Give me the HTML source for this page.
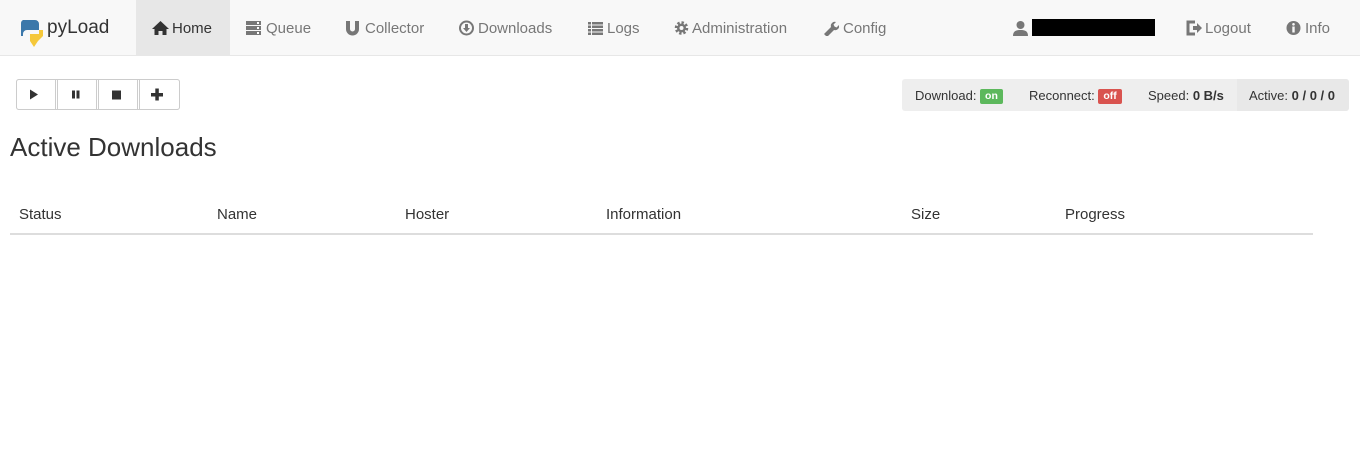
<!DOCTYPE html>
<html><head><meta charset="utf-8"><style>
body{margin:0;width:1360px;height:473px;background:#fff;font-family:"Liberation Sans",sans-serif;color:#333;position:relative;overflow:hidden}
.nav{position:absolute;left:0;top:0;width:1360px;height:55px;background:#f8f8f8;border-bottom:1px solid #e7e7e7}
.a{position:absolute;top:0;height:55px;line-height:57px;font-size:15px;color:#777;white-space:nowrap}
.a svg{position:absolute;top:20px}
.t{position:absolute;font-size:15px;white-space:nowrap}
.btn{position:absolute;top:79px;width:40px;height:30px;border:1px solid #ccc;background:#fff;box-sizing:border-box}
.st{position:absolute;left:902px;top:79px;width:447px;height:32px;background:#eee;border-radius:3px;font-size:13px;line-height:33px}
.lb{display:inline-block;font-size:10.5px;font-weight:bold;color:#fff;line-height:15px;padding:0 5px;border-radius:2px;vertical-align:1px}
</style></head><body>
<div class="nav">
<svg style="position:absolute;left:19px;top:16px" width="26" height="32" viewBox="0 0 26 32"><path d="M4 4h12a4 4 0 0 1 4 4v6H8a4 4 0 0 0-4 4v2H2V8a4 4 0 0 1 2-4z" fill="#3c78aa"/><path d="M20 14h4v6l-5 5-4 6-4-6v-7h9z" fill="#f5c83a"/></svg>
<div class="a" style="left:47px;font-size:19px;color:#333;line-height:55px">pyLoad</div>
<div style="position:absolute;left:136px;top:0;width:94px;height:55px;background:#e7e7e7"></div>
<div class="a" style="left:152px;color:#333"><svg width="17" height="16" viewBox="0 0 17 16" style="left:0"><path d="M8.5 1L0 9h2.5v6h4v-4h4v4h4V9H17z" fill="#333"/></svg><span style="margin-left:20px">Home</span></div>
<div class="a" style="left:246px"><svg width="15" height="16" viewBox="0 0 15 16" style="left:0"><rect x="0" y="1" width="15" height="4" fill="#777"/><rect x="0" y="6" width="15" height="4" fill="#777"/><rect x="0" y="11" width="15" height="4" fill="#777"/><rect x="11" y="2" width="2" height="2" fill="#fff"/><rect x="11" y="7" width="2" height="2" fill="#fff"/><rect x="11" y="12" width="2" height="2" fill="#fff"/></svg><span style="margin-left:20px">Queue</span></div>
<div class="a" style="left:346px"><svg width="13" height="16" viewBox="0 0 13 16" style="left:0"><path d="M0 1h4v8a2.5 2.5 0 0 0 5 0V1h4v8a6.5 6.5 0 0 1-13 0z" fill="#777"/></svg><span style="margin-left:19px">Collector</span></div>
<div class="a" style="left:459px"><svg width="15" height="16" viewBox="0 0 15 16" style="left:0"><circle cx="7.5" cy="8" r="6.5" fill="none" stroke="#777" stroke-width="2"/><path d="M6 4h3v4h2l-3.5 4L4 8h2z" fill="#777"/></svg><span style="margin-left:19px">Downloads</span></div>
<div class="a" style="left:588px"><svg width="15" height="16" viewBox="0 0 15 16" style="left:0"><g fill="#777"><rect x="0" y="2" width="3" height="2.5"/><rect x="4" y="2" width="11" height="2.5"/><rect x="0" y="5.5" width="3" height="2.5"/><rect x="4" y="5.5" width="11" height="2.5"/><rect x="0" y="9" width="3" height="2.5"/><rect x="4" y="9" width="11" height="2.5"/><rect x="0" y="12.5" width="3" height="2.5"/><rect x="4" y="12.5" width="11" height="2.5"/></g></svg><span style="margin-left:19px">Logs</span></div>
<div class="a" style="left:674px"><svg width="15" height="16" viewBox="0 0 15 16" style="left:0"><circle cx="7.5" cy="8" r="5" fill="none" stroke="#777" stroke-width="3.5" stroke-dasharray="2.2 1.7"/><circle cx="7.5" cy="8" r="4.5" fill="#777"/><circle cx="7.5" cy="8" r="2" fill="#f8f8f8"/></svg><span style="margin-left:18px">Administration</span></div>
<div class="a" style="left:823px"><svg width="16" height="16" viewBox="0 0 16 16" style="left:0"><path d="M1 14l7-7a4 4 0 0 1 5-5l-2.5 2.5 1 2 2 1L16 5a4 4 0 0 1-5 5l-7 7z" fill="#777"/></svg><span style="margin-left:20px">Config</span></div>
<div class="a" style="left:1013px"><svg width="15" height="16" viewBox="0 0 15 16" style="left:0"><circle cx="7.5" cy="5" r="4" fill="#777"/><path d="M0 16c0-5 3-6 7.5-6s7.5 1 7.5 6z" fill="#777"/></svg></div>
<div style="position:absolute;left:1032px;top:19px;width:123px;height:17px;background:#000"></div>
<div class="a" style="left:1186px"><svg width="17" height="16" viewBox="0 0 17 16" style="left:0"><path d="M9 2H2v12h7" fill="none" stroke="#777" stroke-width="3"/><path d="M7 6h4V3l5 5-5 5v-3H7z" fill="#777"/></svg><span style="margin-left:19px">Logout</span></div>
<div class="a" style="left:1286px"><svg width="15" height="16" viewBox="0 0 15 16" style="left:0"><circle cx="7.5" cy="8" r="7" fill="#777"/><rect x="6.3" y="6.5" width="2.4" height="6" fill="#f8f8f8"/><circle cx="7.5" cy="4.3" r="1.3" fill="#f8f8f8"/></svg><span style="margin-left:19px">Info</span></div>
</div>
<div style="position:absolute;left:16px;top:79px;width:164px;height:31px;border:1px solid #ccc;border-radius:3px;box-sizing:border-box"></div>
<div class="btn" style="left:16px;height:31px;border-radius:3px 0 0 3px"><svg width="40" height="30" viewBox="0 0 40 30" style="position:absolute;left:-1px;top:-1px"><path d="M14 10.5l8 5-8 5z" fill="#333"/></svg></div>
<div class="btn" style="left:57px;height:31px"><svg width="40" height="30" viewBox="0 0 40 30" style="position:absolute;left:-1px;top:-1px"><rect x="15" y="11.5" width="3" height="8" fill="#333"/><rect x="19.5" y="11.5" width="3" height="8" fill="#333"/></svg></div>
<div class="btn" style="left:98px;height:31px"><svg width="40" height="30" viewBox="0 0 40 30" style="position:absolute;left:-1px;top:-1px"><rect x="14" y="11.5" width="9" height="9" fill="#333"/></svg></div>
<div class="btn" style="left:139px;width:41px;height:31px;border-radius:0 3px 3px 0"><svg width="40" height="30" viewBox="0 0 40 30" style="position:absolute;left:-1px;top:-1px"><rect x="12" y="14" width="12" height="3.5" fill="#333"/><rect x="16.3" y="9.5" width="3.5" height="12" fill="#333"/></svg></div>
<div class="st">
<span style="position:absolute;left:13px">Download: <span class="lb" style="background:#5cb85c">on</span></span>
<span style="position:absolute;left:127px">Reconnect: <span class="lb" style="background:#d9534f">off</span></span>
<span style="position:absolute;left:246px">Speed: <b>0 B/s</b></span>
<span style="position:absolute;left:335px;top:0;width:112px;height:32px;background:#e8e8e8;border-radius:0 3px 3px 0"></span>
<span style="position:absolute;left:347px">Active: <b>0 / 0 / 0</b></span>
</div>
<div class="t" style="left:10px;top:132px;font-size:26px">Active Downloads</div>
<div class="t" style="left:19px;top:206px">Status</div>
<div class="t" style="left:217px;top:206px">Name</div>
<div class="t" style="left:405px;top:206px">Hoster</div>
<div class="t" style="left:606px;top:206px">Information</div>
<div class="t" style="left:911px;top:206px">Size</div>
<div class="t" style="left:1065px;top:206px">Progress</div>
<div style="position:absolute;left:10px;top:233px;width:1303px;height:2px;background:#ddd"></div>
</body></html>
